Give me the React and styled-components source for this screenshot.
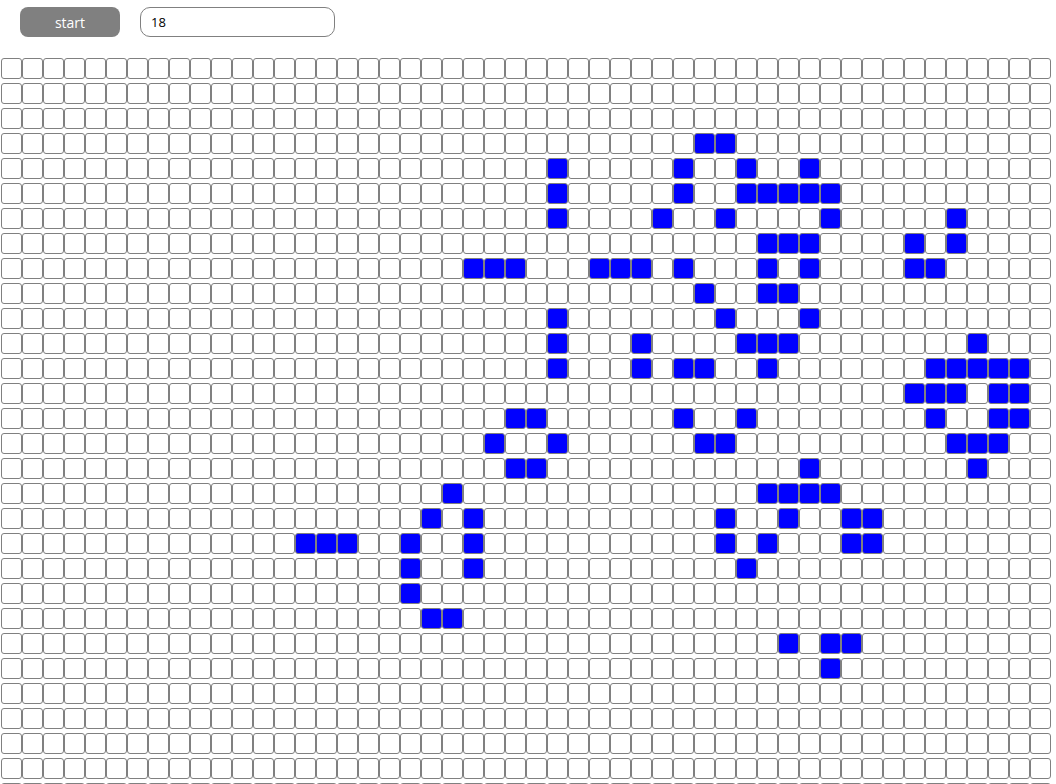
import React from "react";
import styled, { createGlobalStyle } from "styled-components";

const Global = createGlobalStyle`
  html, body {
    margin: 0;
    padding: 0;
    background: #ffffff;
    overflow: hidden;
    font-family: "Open Sans", "Noto Sans", Arial, sans-serif;
  }
`;

const Page = styled.div`
  display: flex;
  flex-direction: column;
`;

const Toolbar = styled.div`
  display: flex;
  align-items: center;
  gap: 20px;
  padding: 7px 0 0 20px;
  height: 30px;
`;

const StartButton = styled.button`
  width: 100px;
  height: 30px;
  border: none;
  border-radius: 8px;
  background: #808080;
  color: #ffffff;
  font-family: "Open Sans", "Noto Sans", Arial, sans-serif;
  font-size: 14px;
  padding: 0;
  cursor: pointer;
`;

const NumberInput = styled.input`
  box-sizing: border-box;
  width: 195px;
  height: 30px;
  border: 1px solid #808080;
  border-radius: 10px;
  padding: 0 0 0 10px;
  font-family: "Open Sans", "Noto Sans", Arial, sans-serif;
  font-size: 13px;
  color: #000;
  outline: none;
`;

const Board = styled.div`
  display: flex;
  flex-direction: column;
  gap: 4px;
  margin-top: 21px;
  padding-left: 1px;
`;

const Row = styled.div`
  display: flex;
`;

const Cell = styled.div`
  box-sizing: border-box;
  width: 21px;
  height: 21px;
  flex: none;
  border: 1px solid #808080;
  border-radius: 3px;
  background: ${(p) => (p.$alive ? "#0000ff" : "#ffffff")};
`;

const ROWS = 30;
const COLS = 50;

const aliveList = {
  3: [33, 34],
  4: [26, 32, 35, 38],
  5: [26, 32, 35, 36, 37, 38, 39],
  6: [26, 31, 34, 39, 45],
  7: [36, 37, 38, 43, 45],
  8: [22, 23, 24, 28, 29, 30, 32, 36, 38, 43, 44],
  9: [33, 36, 37],
  10: [26, 34, 38],
  11: [26, 30, 35, 36, 37, 46],
  12: [26, 30, 32, 33, 36, 44, 45, 46, 47, 48],
  13: [43, 44, 45, 47, 48],
  14: [24, 25, 32, 35, 44, 47, 48],
  15: [23, 26, 33, 34, 45, 46, 47],
  16: [24, 25, 38, 46],
  17: [21, 36, 37, 38, 39],
  18: [20, 22, 34, 37, 40, 41],
  19: [14, 15, 16, 19, 22, 34, 36, 40, 41],
  20: [19, 22, 35],
  21: [19],
  22: [20, 21],
  23: [37, 39, 40],
  24: [39],
};

export default function App() {
  const rows = [];
  for (let r = 0; r < ROWS; r++) {
    const set = new Set(aliveList[r] || []);
    const cells = [];
    for (let c = 0; c < COLS; c++) {
      cells.push(<Cell key={c} $alive={set.has(c)} />);
    }
    rows.push(<Row key={r}>{cells}</Row>);
  }
  return (
    <Page>
      <Global />
      <Toolbar>
        <StartButton>start</StartButton>
        <NumberInput type="text" defaultValue="18" />
      </Toolbar>
      <Board>{rows}</Board>
    </Page>
  );
}
